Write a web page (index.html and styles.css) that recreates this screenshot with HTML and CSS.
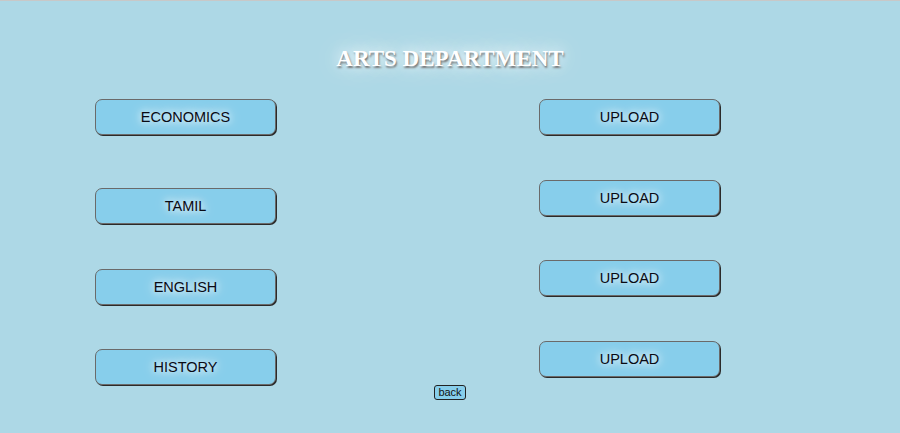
FILE: index.html
```html
<!DOCTYPE html>
<html>
<head>
<meta charset="utf-8">
<link rel="stylesheet" href="styles.css">
</head>
<body>
<div class="page">
  <h1 class="title">ARTS DEPARTMENT</h1>
  <div class="cols">
    <div class="col col-left">
      <button class="btn first">ECONOMICS</button>
      <button class="btn">TAMIL</button>
      <button class="btn">ENGLISH</button>
      <button class="btn">HISTORY</button>
    </div>
    <div class="col col-right">
      <button class="btn">UPLOAD</button>
      <button class="btn">UPLOAD</button>
      <button class="btn">UPLOAD</button>
      <button class="btn">UPLOAD</button>
    </div>
  </div>
  <div class="back-row"><button class="back">back</button></div>
</div>
</body>
</html>
```
FILE: styles.css
```css
html, body {
  margin: 0;
  padding: 0;
}
body {
  background: #add8e6;
  width: 900px;
  height: 433px;
  overflow: hidden;
  border-top: 1px solid #c8c8c8;
  box-sizing: border-box;
}
.page {
  display: flex;
  flex-direction: column;
}
.title {
  margin: 46px 0 0 0;
  text-align: center;
  font-family: "Liberation Serif", serif;
  font-weight: bold;
  font-size: 23px;
  line-height: 24px;
  color: #fff;
  text-shadow: 1px 2px 2px #777, 0 0 30px #e8f4f8, 0 0 14px #fff;
}
.cols {
  display: flex;
  padding-left: 95px;
  gap: 263px;
  margin-top: 28px;
}
.col {
  display: flex;
  flex-direction: column;
  gap: 44.7px;
}
.col-left .btn.first {
  margin-bottom: 8.3px;
}
.btn {
  width: 181px;
  height: 36px;
  background: #87ceeb;
  border: 1px solid #6a6a6a;
  border-radius: 7px;
  box-shadow: 1px 1px 0 #2a2a2a;
  font-family: "Liberation Sans", Arial, sans-serif;
  font-size: 14.5px;
  color: #0a0a14;
  text-shadow: 0 0 14px #fff, 0 0 7px #fff;
  padding: 0;
}
.back-row {
  display: flex;
  justify-content: center;
  margin-top: 0;
}
.back {
  width: 32px;
  height: 15px;
  padding: 0;
  background: #87ceeb;
  border: 1px solid #222;
  border-radius: 3px;
  font-family: "Liberation Sans", Arial, sans-serif;
  font-size: 11px;
  line-height: 13px;
  color: #111;
}
```
